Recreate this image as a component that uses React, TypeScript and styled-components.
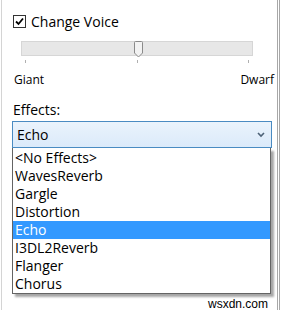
import React from "react";
import styled, { createGlobalStyle } from "styled-components";

const GlobalStyle = createGlobalStyle`
    html, body {
        margin: 0;
        padding: 0;
        background: #ffffff;
    }
    body {
        font-family: "Open Sans", "Noto Sans", sans-serif;
        color: #000;
    }
`

const Frame = styled.div`
    box-sizing: border-box;
    width: 279px;
    height: 310px;
    margin-left: 1px;
    border-left: 1px solid #d4d4d4;
    border-right: 3px double #a8a8a8;
    padding: 14px 0 0 11px;
    position: relative;
`

const CheckRow = styled.label`
    display: flex;
    align-items: center;
    gap: 5px;
    font-size: 14px;
    height: 15px;
`

const CheckBox = styled.span`
    box-sizing: border-box;
    width: 13px;
    height: 13px;
    border: 1px solid #333;
    background: #fff;
    display: flex;
    align-items: center;
    justify-content: center;
`

const SliderBox = styled.div`
    margin: 12px 0 0 8px;
    width: 232px;
`

const Track = styled.div`
    box-sizing: border-box;
    height: 15px;
    background: #e7e7e7;
    border: 1px solid #d6d6d6;
    position: relative;
`

const Thumb = styled.svg`
    position: absolute;
    left: 112px;
    top: -1px;
`

const Ticks = styled.div`
    display: flex;
    justify-content: space-between;
    padding: 0 4px 0 4px;
    height: 8px;
    margin-top: 4px;
`

const Tick = styled.span`
    width: 1px;
    height: 3px;
    background: #b0b0b0;
`

const Scale = styled.div`
    display: flex;
    justify-content: space-between;
    width: 260px;
    font-size: 12px;
    margin: 3px 0 0 1px;
`

const Caption = styled.div`
    font-size: 14px;
    margin-top: 12px;
`

const Combo = styled.div`
    box-sizing: border-box;
    width: 260px;
    height: 27px;
    margin: 2px 0 0 -1px;
    border: 1px solid #4a8bc2;
    background: linear-gradient(#eaf3fc, #dbeafa);
    display: flex;
    align-items: center;
    justify-content: space-between;
    padding: 0 6px 0 4px;
    font-size: 14px;
`

const List = styled.ul`
    box-sizing: border-box;
    list-style: none;
    margin: 0 0 0 -1px;
    padding: 1px 0 0;
    width: 259px;
    border: 1px solid #646464;
    border-top: none;
    background: #fff;
    box-shadow: 3px 3px 2px rgba(0, 0, 0, 0.35);
`

const Item = styled.li<{ $active?: boolean }>`
    height: 18px;
    line-height: 18px;
    padding-left: 2px;
    font-size: 14px;
    background: ${p => (p.$active ? "#3399ff" : "transparent")};
    color: ${p => (p.$active ? "#fff" : "#000")};
`

const Watermark = styled.div`
    position: absolute;
    right: 9px;
    bottom: -1px;
    font-size: 12px;
    font-family: "Liberation Sans", sans-serif;
`

const effects = [
    "<No Effects>",
    "WavesReverb",
    "Gargle",
    "Distortion",
    "Echo",
    "I3DL2Reverb",
    "Flanger",
    "Chorus",
];

export default function App() {
    return (
        <>
            <GlobalStyle />
            <Frame>
                <CheckRow>
                    <CheckBox>
                        <svg width="11" height="11" viewBox="0 0 11 11">
                            <path d="M2 5.5 L4.5 8 L9 2.5" fill="none" stroke="#000" strokeWidth="1.8" />
                        </svg>
                    </CheckBox>
                    Change Voice
                </CheckRow>
                <SliderBox>
                    <Track>
                        <Thumb width="9" height="17" viewBox="0 0 9 17">
                            <path d="M0.5 1.5 Q0.5 0.5 1.5 0.5 L7.5 0.5 Q8.5 0.5 8.5 1.5 L8.5 12 L4.5 16 L0.5 12 Z" fill="#f2f2f2" stroke="#8a8a8a" />
                        </Thumb>
                    </Track>
                    <Ticks>
                        <Tick />
                        <Tick />
                        <Tick />
                    </Ticks>
                </SliderBox>
                <Scale>
                    <span>Giant</span>
                    <span>Dwarf</span>
                </Scale>
                <Caption>Effects:</Caption>
                <Combo>
                    <span>Echo</span>
                    <svg width="8" height="6" viewBox="0 0 8 6">
                        <path d="M1 1 L4 4 L7 1" fill="none" stroke="#4d6277" strokeWidth="1.6" />
                    </svg>
                </Combo>
                <List>
                    {effects.map(e => (
                        <Item key={e} $active={e === "Echo"}>{e}</Item>
                    ))}
                </List>
                <Watermark>wsxdn.com</Watermark>
            </Frame>
        </>
    );
}
